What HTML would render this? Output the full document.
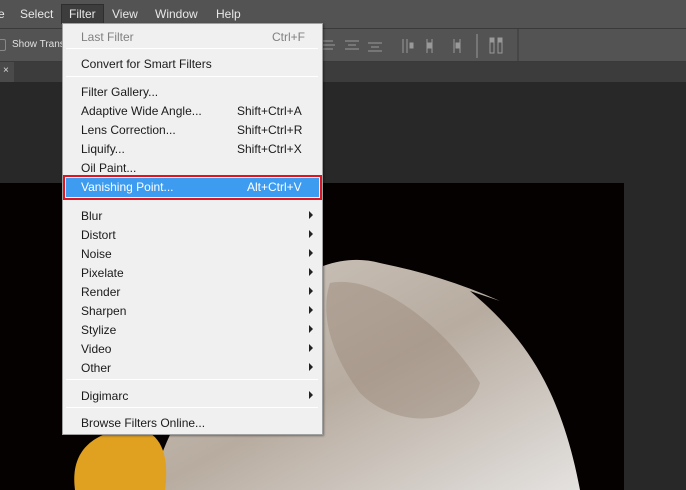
<!DOCTYPE html>
<html><head><style>
*{margin:0;padding:0;box-sizing:border-box}
body{width:686px;height:490px;overflow:hidden;background:#282828;font-family:"Liberation Sans",sans-serif;position:relative}
.mb{position:absolute;left:0;top:0;width:686px;height:28px;background:#535353}
.mb span{position:absolute;top:7px;color:#e8e8e8;font-size:12px}
.tb{position:absolute;left:0;top:28px;width:686px;height:34px;background:#535353;border-top:1px solid #3a3a3a;border-bottom:1px solid #3a3a3a}
.tab{position:absolute;left:0;top:62px;width:686px;height:20px;background:#3c3c3c}
.menu{position:absolute;left:62px;top:23px;width:261px;height:412px;background:#f0f0f0;border:1px solid #a0a0a0;box-shadow:1px 1px 2px rgba(0,0,0,.4)}
.it{position:absolute;left:18px;font-size:12px;color:#1a1a1a}
.sc{position:absolute;font-size:12px;color:#1a1a1a}
.sep{position:absolute;left:3px;width:252px;height:1px;background:#a0a0a0;border-bottom:1px solid #fff}
.ar{position:absolute;left:246px;width:0;height:0;border-top:4px solid transparent;border-bottom:4px solid transparent;border-left:4px solid #222}
</style></head><body>
<div class="mb">
<span style="left:-2px">e</span><span style="left:20px">Select</span>
<div style="position:absolute;left:61px;top:4px;width:43px;height:20px;background:#3d3d3d;border:1px solid #2e2e2e"></div>
<span style="left:69px">Filter</span><span style="left:112px">View</span><span style="left:155px">Window</span><span style="left:216px">Help</span>
</div>
<div class="tb">
<div style="position:absolute;left:-4px;top:10px;width:10px;height:12px;border:1px solid #888;border-radius:2px"></div>
<span style="position:absolute;left:12px;top:10px;color:#e0e0e0;font-size:10px">Show Trans</span>
<svg style="position:absolute;left:320px;top:0" width="200" height="34" fill="none" stroke="#999">
<path d="M3 12h10M3 16h12M3 20h10M25 12h14M28 16h8M25 20h14M48 14h14M51 18h8M48 22h14"/>
<path d="M83 10v14M87 10v14M90 16h3M107 10v14M112 10v14M134 10v14M140 10v14"/>
<rect x="90" y="14" width="3" height="5" fill="#999"/><rect x="108" y="14" width="4" height="5" fill="#999"/><rect x="136" y="14" width="4" height="5" fill="#999"/>
<path d="M157 5v24"/><rect x="170" y="10" width="4" height="14"/><rect x="178" y="10" width="4" height="14"/><rect x="170" y="9" width="4" height="4" fill="#999"/><rect x="178" y="9" width="4" height="4" fill="#999"/>
<path d="M198 0v34" stroke="#3a3a3a"/>
</svg>
</div>
<div class="tab"><div style="position:absolute;left:0;top:0;width:14px;height:20px;background:#4a4a4a;color:#ddd;font-size:10px;padding:3px">×</div></div>
<svg style="position:absolute;left:0;top:183px" width="624" height="307">
<defs><linearGradient id="g" x1="0" y1="0" x2="1" y2="1"><stop offset="0" stop-color="#cfc8c0"/><stop offset=".5" stop-color="#b8aca0"/><stop offset="1" stop-color="#e4e2e0"/></linearGradient></defs>
<rect width="624" height="307" fill="#060101"/>
<path d="M150 307 C170 230 230 140 290 100 C320 80 350 72 380 80 C420 88 460 100 500 118 L470 108 C520 150 560 200 580 307 Z" fill="url(#g)"/>
<path d="M330 100 C380 90 450 150 480 200 C470 240 400 250 360 210 C330 170 320 130 330 100Z" fill="#9a8878" opacity=".45"/>
<path d="M75 307 C70 270 90 250 130 245 C160 245 170 270 165 307 Z" fill="#e0a020"/>
</svg>
<div class="menu">
<div class="it" style="top:6px;color:#808080">Last Filter</div><div class="sc" style="left:209px;top:6px;color:#808080">Ctrl+F</div>
<div class="sep" style="top:24px"></div>
<div class="it" style="top:33px">Convert for Smart Filters</div>
<div class="sep" style="top:52px"></div>
<div class="it" style="top:61px">Filter Gallery...</div>
<div class="it" style="top:80px">Adaptive Wide Angle...</div><div class="sc" style="left:174px;top:80px">Shift+Ctrl+A</div>
<div class="it" style="top:99px">Lens Correction...</div><div class="sc" style="left:174px;top:99px">Shift+Ctrl+R</div>
<div class="it" style="top:118px">Liquify...</div><div class="sc" style="left:174px;top:118px">Shift+Ctrl+X</div>
<div class="it" style="top:137px">Oil Paint...</div>
<div style="position:absolute;left:0;top:151px;width:259px;height:25px;border:2px solid #e0141e;padding:1px"><div style="background:#3d9cf0;width:100%;height:100%"></div></div>
<div class="it" style="top:156px;color:#fff">Vanishing Point...</div><div class="sc" style="left:184px;top:156px;color:#fff">Alt+Ctrl+V</div>
<div class="it" style="top:185px">Blur</div><div class="ar" style="top:187px"></div>
<div class="it" style="top:204px">Distort</div><div class="ar" style="top:206px"></div>
<div class="it" style="top:223px">Noise</div><div class="ar" style="top:225px"></div>
<div class="it" style="top:242px">Pixelate</div><div class="ar" style="top:244px"></div>
<div class="it" style="top:261px">Render</div><div class="ar" style="top:263px"></div>
<div class="it" style="top:280px">Sharpen</div><div class="ar" style="top:282px"></div>
<div class="it" style="top:299px">Stylize</div><div class="ar" style="top:301px"></div>
<div class="it" style="top:318px">Video</div><div class="ar" style="top:320px"></div>
<div class="it" style="top:337px">Other</div><div class="ar" style="top:339px"></div>
<div class="sep" style="top:355px"></div>
<div class="it" style="top:365px">Digimarc</div><div class="ar" style="top:367px"></div>
<div class="sep" style="top:383px"></div>
<div class="it" style="top:392px">Browse Filters Online...</div>
</div>
</body></html>
